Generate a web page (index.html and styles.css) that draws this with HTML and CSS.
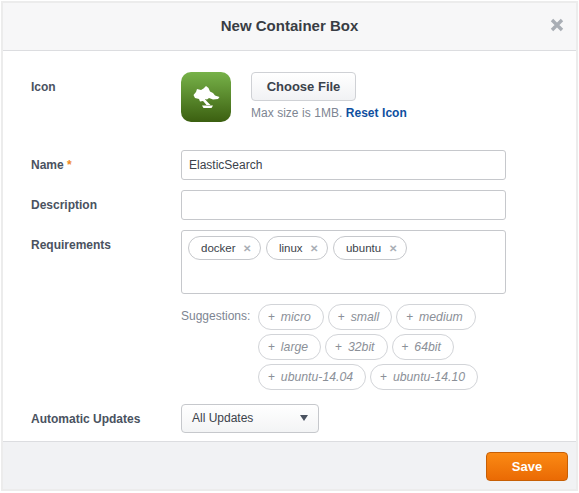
FILE: index.html
```html
<!DOCTYPE html>
<html lang="en">
<head>
  <meta charset="UTF-8">
  <title>New Container Box</title>
  <link rel="stylesheet" href="styles.css">
</head>
<body>
  <div class="modal">
    <div class="modal-header">
      <h3>New Container Box</h3>
      <svg class="close" width="14" height="14" viewBox="0 0 14 14"><path d="M2 2l10 10M12 2L2 12" stroke="#a9aeb5" stroke-width="3.4" fill="none"/></svg>
    </div>

    <form class="modal-body">
      <div class="row row-icon">
        <label>Icon</label>
        <div class="icon-box">
          <svg width="50" height="50" viewBox="0 0 50 50">
            <path fill="#fff" d="M12.500 23L15 20l1-3 4 1 2.500-1.500L25 14l2.500 2 1.500 3.500 3 1.500 2 2.500 4.500 1.500-1.500 2-5 .5-4-1.500-2 1.500-2-.5-2 2-3 .5-1-2.500-4-1z"/>
            <path fill="#fff" d="M20.500 27.500L23 26l3 3.500 3.500 3.500h-4l-3-3.500z"/>
            <path fill="#fff" d="M21 33.500h11L30.500 36h-8z"/>
          </svg>
        </div>
        <div class="icon-side">
          <button type="button" class="btn">Choose File</button>
          <p class="help">Max size is 1MB. <a href="#">Reset Icon</a></p>
        </div>
      </div>

      <div class="row">
        <label>Name <span class="req">*</span></label>
        <input class="field" type="text" value="ElasticSearch">
      </div>
      <div class="row">
        <label>Description</label>
        <input class="field" type="text">
      </div>
      <div class="row">
        <label>Requirements</label>
        <div class="field tags">
          <span class="tag">docker <i>&#x2715;</i></span>
          <span class="tag">linux <i>&#x2715;</i></span>
          <span class="tag">ubuntu <i>&#x2715;</i></span>
        </div>
      </div>
      <div class="row row-suggest">
        <span class="suggest-label">Suggestions:</span>
        <div class="suggest-list">
          <span class="chip">+ <em>micro</em></span>
          <span class="chip">+ <em>small</em></span>
          <span class="chip">+ <em>medium</em></span>
          <span class="chip">+ <em>large</em></span>
          <span class="chip">+ <em>32bit</em></span>
          <span class="chip">+ <em>64bit</em></span>
          <span class="chip">+ <em>ubuntu-14.04</em></span>
          <span class="chip">+ <em>ubuntu-14.10</em></span>
        </div>
      </div>
      <div class="row row-select">
        <label>Automatic Updates</label>
        <div class="select">All Updates<b></b></div>
      </div>
    </form>

    <div class="modal-footer">
      <button type="button" class="save">Save</button>
    </div>
  </div>
</body>
</html>
```

FILE: styles.css
```css
* {
  box-sizing: border-box;
}

body {
  margin: 0;
  padding: 1px;
  background: #fff;
  font-family: "Liberation Sans", Arial, sans-serif;
  font-size: 12px;
  color: #3b424b;
}

.modal {
  height: 490px;
  border: 2px solid #ececec;
  display: flex;
  flex-direction: column;
  background: #fff;
}

.modal-header {
  height: 48px;
  flex: none;
  background: #f7f7f8;
  border-bottom: 1px solid #dcdde0;
  display: flex;
  align-items: center;
  justify-content: center;
  position: relative;
}

.modal-header h3 {
  margin: 0 0 2px;
  font-size: 15px;
  font-weight: bold;
  color: #393d44;
}

.close {
  position: absolute;
  right: 12px;
  top: 15px;
}

.modal-body {
  flex: 1;
  padding: 21px 0 0 28px;
}

.row {
  display: flex;
  margin-bottom: 10px;
}

.row label {
  width: 150px;
  flex: none;
  padding-top: 8px;
  font-weight: bold;
  color: #4a5260;
  font-size: 12px;
}

.req {
  color: #f08a24;
}

.row-icon {
  height: 68px;
  margin-bottom: 10px;
}

.icon-box {
  width: 50px;
  height: 50px;
  border-radius: 10px;
  background: linear-gradient(#77b249, #3b5f10);
}

.icon-side {
  margin-left: 20px;
}

.btn {
  display: block;
  width: 105px;
  height: 29px;
  padding: 0;
  border: 1px solid #cfd1d5;
  border-radius: 4px;
  background: linear-gradient(#fff, #f1f2f4);
  font: bold 13px "Liberation Sans", Arial, sans-serif;
  color: #3b424b;
}

.help {
  margin: 5px 0 0;
  color: #7d8592;
  font-size: 12px;
  word-spacing: 0.2px;
}

.help a {
  color: #0f4fa0;
  font-weight: bold;
  text-decoration: none;
}

.field {
  width: 325px;
  height: 30px;
  border: 1px solid #c6c8cc;
  border-radius: 3px;
  background: #fff;
  padding: 0 7px;
  font: 12px "Liberation Sans", Arial, sans-serif;
  color: #3b424b;
}

.tags {
  height: 64px;
  padding: 5px 6px;
  display: flex;
  align-items: flex-start;
  gap: 5px;
}

.tag {
  height: 24px;
  border: 1px solid #c6c8cc;
  border-radius: 12px;
  padding: 0 9px 0 12px;
  display: flex;
  align-items: center;
  gap: 7.400px;
  font-size: 11.500px;
  color: #3b424b;
}

.tag i {
  font-style: normal;
  font-size: 10px;
  color: #a9aeb5;
  font-weight: bold;
}

.row-suggest {
  margin-bottom: 14px;
}

.suggest-label {
  width: 77px;
  flex: none;
  margin-left: 150px;
  padding-top: 5px;
  color: #7d8592;
}

.suggest-list {
  width: 240px;
  display: flex;
  flex-wrap: wrap;
  gap: 4px;
}

.chip {
  height: 26px;
  border: 1px solid #d2d4d8;
  border-radius: 13px;
  padding: 0 12px 0 9px;
  display: flex;
  align-items: center;
  gap: 2.500px;
  white-space: pre;
  color: #8b9098;
  font-size: 12px;
}

.chip em {
  font-size: 12.250px;
}

.row-select {
  margin-bottom: 0;
}

.select {
  width: 138px;
  height: 29px;
  border: 1px solid #c6c8cc;
  border-radius: 4px;
  background: linear-gradient(#fff, #f3f4f5);
  padding: 6px 10px;
  display: flex;
  justify-content: space-between;
  color: #3b424b;
}

.select b {
  width: 0;
  height: 0;
  margin-top: 4px;
  border: 4.500px solid transparent;
  border-top: 6px solid #4a5260;
  border-bottom: 0;
}

.modal-footer {
  height: 48px;
  flex: none;
  background: #f1f2f4;
  border-top: 1px solid #dcdde0;
  padding: 10px 8px 0 0;
  display: flex;
  justify-content: flex-end;
  align-items: flex-start;
}

.save {
  width: 82px;
  height: 29px;
  border: 1px solid #c75f05;
  border-radius: 4px;
  background: linear-gradient(#fb8a14, #ea6a04);
  color: #fff;
  font: bold 13px "Liberation Sans", Arial, sans-serif;
}
```
